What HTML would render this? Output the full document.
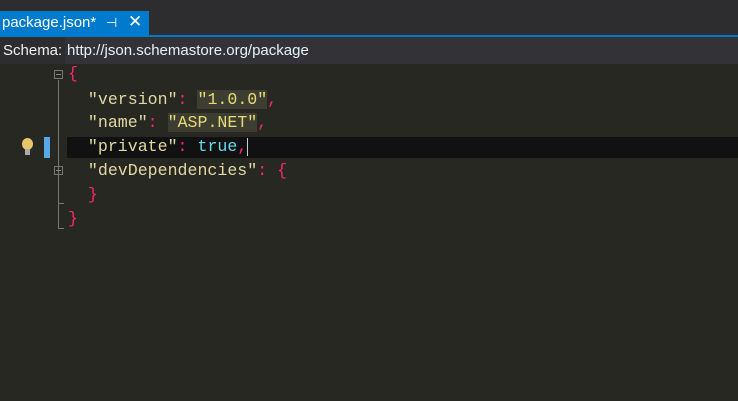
<!DOCTYPE html><html><head><style>
body{margin:0;width:738px;height:401px;background:#272822;overflow:hidden;position:relative;font-family:"Liberation Sans",sans-serif}
.top{position:absolute;left:0;top:0;width:738px;height:36px;background:#2d2d30}
.tab{position:absolute;left:0;top:11px;width:149px;height:25px;background:#007acc;color:#fff;font-size:15px;line-height:24px}
.line{position:absolute;left:0;top:35px;width:738px;height:2px;background:#007acc}
.schema{position:absolute;left:0;top:37px;width:738px;height:27px;background:#2d2d30;color:#f1f1f1;font-size:15px;line-height:27px}
.url{position:absolute;left:65px;top:0;right:0;height:27px;background:#333337;padding-left:2px;color:#e6f1fb}
.code{position:absolute;left:0;top:0;font-family:"Liberation Mono",monospace;font-size:16.6px;white-space:pre}
.l{position:absolute;left:68px;height:24px;line-height:24px}
.k{color:#e0d9a4}.p{color:#f92672}.s{color:#e6db74;background:#3e3d32}.t{color:#66d9ef}
.cur{position:absolute;left:67px;top:137px;width:671px;height:21px;background:#111111}
.fold{position:absolute;width:9px;height:9px;border:1px solid #777;box-sizing:border-box}
.fold::after{content:"";position:absolute;left:1px;top:3px;width:5px;height:1px;background:#888}
.vl{position:absolute;left:58px;width:1px;background:#777}
</style></head><body>
<div class="top"></div>
<div class="tab"><span style="margin-left:2px">package.json*</span>
<span style="position:absolute;left:106px;top:0;font-size:13px">⊣</span>
<span style="position:absolute;left:128px;top:-1px;font-size:17px">✕</span></div>
<div class="line"></div>
<div class="schema"><span style="margin-left:3px">Schema:</span><div class="url">http://json.schemastore.org/package</div></div>
<div class="cur"></div>
<div class="fold" style="left:54px;top:70px"></div>
<div class="vl" style="top:80px;height:148px"></div>
<div class="fold" style="left:54px;top:166px"></div>
<div style="position:absolute;left:58px;top:203px;width:6px;height:1px;background:#777"></div>
<div style="position:absolute;left:58px;top:228px;width:6px;height:1px;background:#777"></div>
<div style="position:absolute;left:44px;top:137px;width:6px;height:21px;background:#58a8e8"></div>
<div style="position:absolute;left:22px;top:138px;width:11px;height:12px;border-radius:50%;background:#e8c56a"></div>
<div style="position:absolute;left:25px;top:149px;width:5px;height:6px;background:#aaa"></div>
<div class="code">
<div class="l" style="top:62px"><span class="p">{</span></div>
<div class="l" style="top:88px">  <span class="k">"version"</span><span class="p">:</span> <span class="s">"1.0.0"</span><span class="p">,</span></div>
<div class="l" style="top:111px">  <span class="k">"name"</span><span class="p">:</span> <span class="s">"ASP.NET"</span><span class="p">,</span></div>
<div class="l" style="top:135px">  <span class="k">"private"</span><span class="p">:</span> <span class="t">true</span><span class="p">,</span><span style="display:inline-block;width:1px;height:18px;background:#ccc;vertical-align:middle"></span></div>
<div class="l" style="top:159px">  <span class="k">"devDependencies"</span><span class="p">:</span> <span class="p">{</span></div>
<div class="l" style="top:183px">  <span class="p">}</span></div>
<div class="l" style="top:207px"><span class="p">}</span></div>
</div>
</body></html>
